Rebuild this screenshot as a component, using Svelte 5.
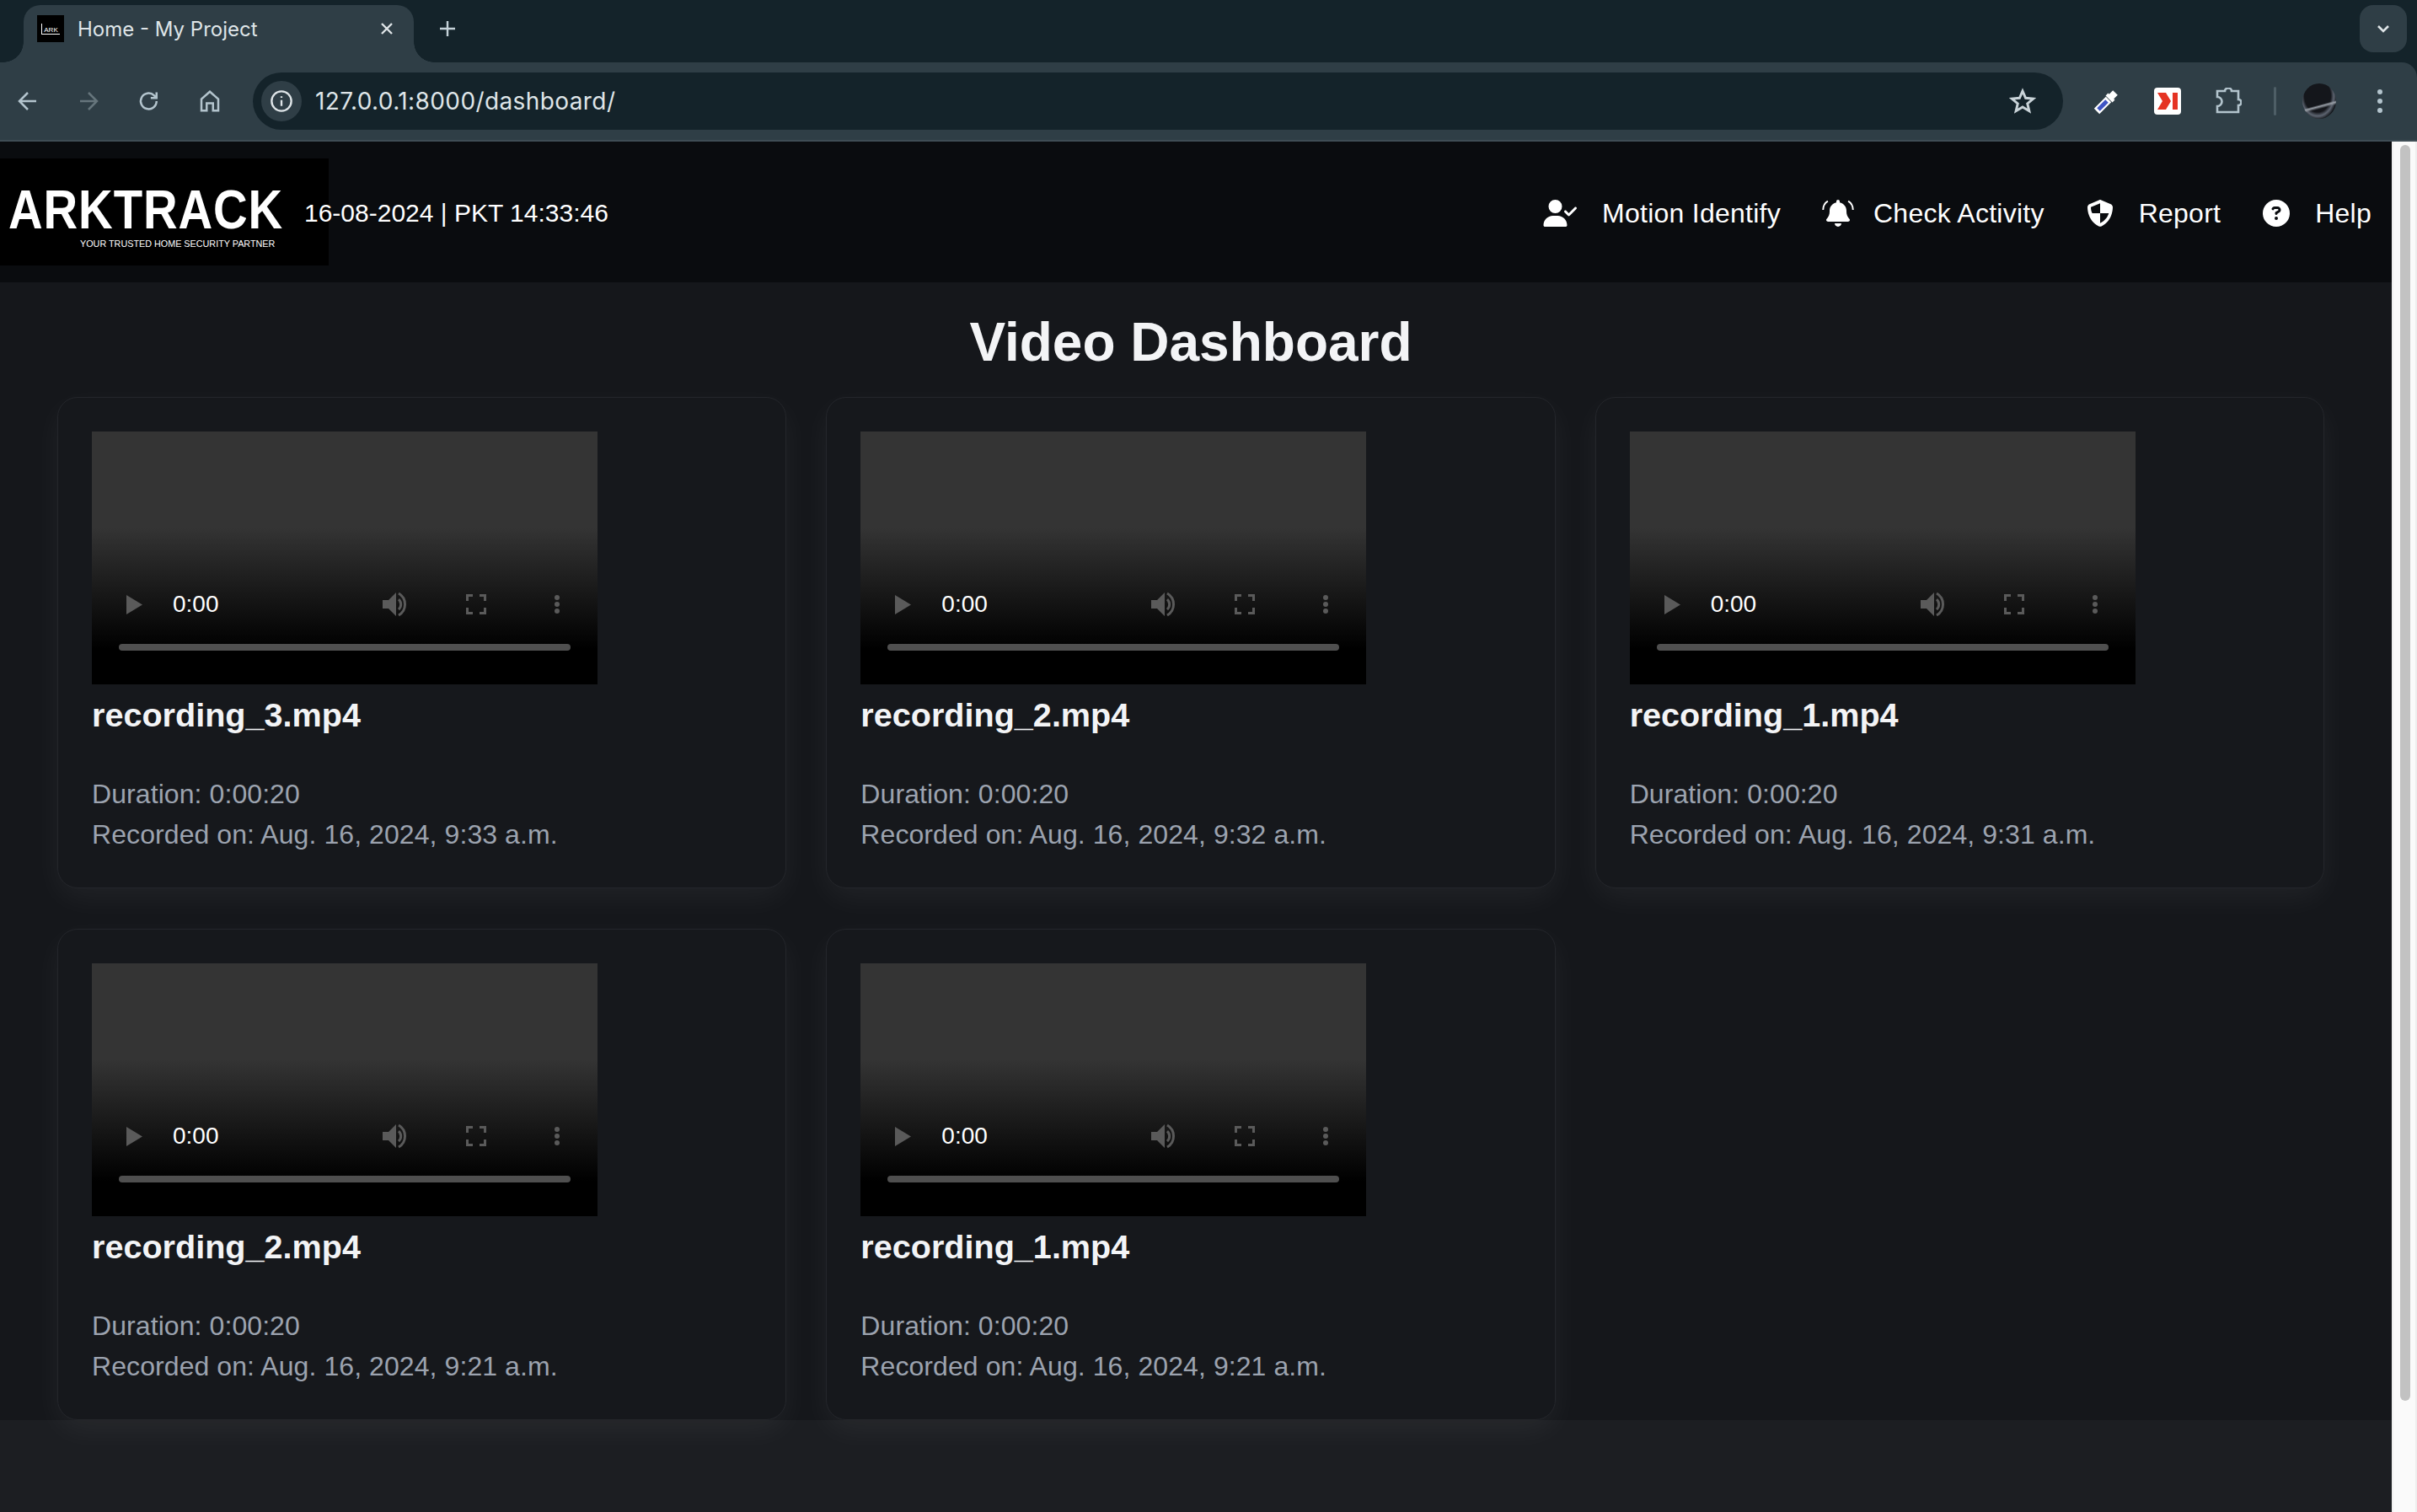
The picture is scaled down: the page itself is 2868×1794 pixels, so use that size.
<script>
	const recordings = [
		{ name: "recording_3.mp4", date: "Aug. 16, 2024, 9:33 a.m." },
		{ name: "recording_2.mp4", date: "Aug. 16, 2024, 9:32 a.m." },
		{ name: "recording_1.mp4", date: "Aug. 16, 2024, 9:31 a.m." },
		{ name: "recording_2.mp4", date: "Aug. 16, 2024, 9:21 a.m." },
		{ name: "recording_1.mp4", date: "Aug. 16, 2024, 9:21 a.m." }
	];
</script>

<div class="chrome">
	<div class="tabstrip">
		<div class="tab">
			<span class="favicon"><span>ARK</span></span>
			<span class="tab-title">Home - My Project</span>
			<svg class="tab-x" viewBox="0 0 16 16"><path d="M2 2l12 12M14 2L2 14" /></svg>
		</div>
		<svg class="newtab" viewBox="0 0 20 20"><path d="M10 1v18M1 10h18" /></svg>
		<div class="tab-menu">
			<svg viewBox="0 0 16 10"><path d="M2 2l6 6 6-6" /></svg>
		</div>
	</div>
	<div class="toolbar">
		<svg class="tb-icon" viewBox="0 0 24 24"><path d="M20 12H5M12 4l-8 8 8 8" /></svg>
		<svg class="tb-icon dim" viewBox="0 0 24 24"><path d="M4 12h15M12 4l8 8-8 8" /></svg>
		<svg class="tb-icon" viewBox="0 0 24 24"><path d="M19 12a7.500 7.500 0 1 1-2.400-5.500L19 9M19 3.500V9h-5.500" /></svg>
		<svg class="tb-icon" viewBox="0 0 24 24"><path d="M4 21V10l8-7 8 7v11h-5v-7H9v7z" /></svg>
		<div class="omnibox">
			<span class="info">
				<svg viewBox="0 0 24 24"><circle cx="12" cy="12" r="10" /><path d="M12 11v6M12 7v1.600" /></svg>
			</span>
			<span class="url">127.0.0.1:8000/dashboard/</span>
			<svg class="star" viewBox="0 0 24 24"><path d="M12 3l2.700 6.200 6.800.6-5.200 4.400 1.600 6.600L12 17.300 6.100 20.800l1.600-6.600L2.500 9.800l6.800-.6z" /></svg>
		</div>
		<svg class="ext dropper" viewBox="0 0 32 32">
			<path d="M4 28L18 14" stroke="#fff" stroke-width="9" />
			<path d="M6 26L16 16" stroke="#3f55c4" stroke-width="5" />
			<path d="M16 8l8 8" stroke="#fff" stroke-width="4" />
			<path d="M21 11l5-5" stroke="#fff" stroke-width="8" />
		</svg>
		<div class="ext-red">
			<svg viewBox="0 0 32 32"><path d="M4 6h10l6 10-6 10H4l6-10zM22 6h6v20h-6z" fill="#e53323" /></svg>
		</div>
		<svg class="ext puzzle" viewBox="0 0 32 32"><path d="M3 4h9a4 3.500 0 0 1 8 0h8v10a3.500 3.500 0 0 1 0 7v8H3v-7a4 4 0 0 0 0-11z" /></svg>
		<span class="sep"></span>
		<span class="avatar"></span>
		<div class="dots"><i></i><i></i><i></i></div>
	</div>
</div>

<div class="page">
	<div class="content">
		<header>
			<div class="left">
				<div class="logo">
					<span class="wordmark">ARKTRACK</span>
					<span class="tagline">YOUR TRUSTED HOME SECURITY PARTNER</span>
				</div>
				<span class="clock">16-08-2024 | PKT 14:33:46</span>
			</div>
			<nav>
				<a href="#motion">
					<svg class="i-user" viewBox="0 0 640 512"><path d="M96 128a128 128 0 1 1 256 0A128 128 0 1 1 96 128zM0 482.300C0 383.800 79.800 304 178.300 304h91.400C368.200 304 448 383.800 448 482.300c0 16.400-13.300 29.700-29.700 29.700H29.700C13.300 512 0 498.700 0 482.300zM625 177L497 305c-9.400 9.400-24.600 9.400-33.900 0l-64-64c-9.400-9.400-9.400-24.600 0-33.900s24.600-9.400 33.900 0L480 254.100 591 143c9.400-9.400 24.600-9.400 33.900 0s9.400 24.600 0 33.900z" /></svg>
					Motion Identify
				</a>
				<a class="check" href="#activity">
					<svg class="i-bell" viewBox="-90 0 628 512">
						<path d="M224 0c-17.700 0-32 14.300-32 32V51.200C119 66 64 130.600 64 208v18.800c0 47-17.300 92.400-48.500 127.600l-7.400 8.300c-8.400 9.400-10.400 22.900-5.300 34.400S19.400 416 32 416H416c12.600 0 24-7.400 29.200-18.900s3.100-25-5.300-34.400l-7.400-8.300C401.300 319.200 384 273.900 384 226.800V208c0-77.400-55-142-128-156.800V32c0-17.700-14.300-32-32-32zm45.300 493.300c12-12 18.700-28.300 18.700-45.300H224 160c0 17 6.700 33.300 18.700 45.300s28.300 18.700 45.300 18.700s33.300-6.700 45.300-18.700z" />
						<path class="ring" d="M-60 190C-60 120-25 60 30 25M508 190C508 120 473 60 418 25" />
					</svg>
					Check Activity
				</a>
				<a href="#report">
					<svg class="i-shield" viewBox="0 0 512 512">
						<path d="M256 0c4.600 0 9.200 1 13.400 2.900L457.700 82.800c22 9.300 38.400 31 38.300 57.200c-.5 99.200-41.300 280.700-213.600 363.200c-16.700 8-36.100 8-52.800 0C57.300 420.700 16.500 239.200 16 140c-.1-26.200 16.300-47.900 38.300-57.200L242.700 2.900C246.800 1 251.400 0 256 0z" />
						<path class="quad" d="M256 66.800L80 141.400c.4 35 7 85 26 114.600h150zM256 256v188.800C340 404 400 330 420 256z" />
					</svg>
					Report
				</a>
				<a href="#help">
					<svg class="i-help" viewBox="0 0 512 512"><path d="M256 512A256 256 0 1 0 256 0a256 256 0 1 0 0 512zM169.800 165.300c7.900-22.300 29.100-37.300 52.800-37.300h58.300c34.900 0 63.100 28.300 63.100 63.100c0 22.600-12.100 43.500-31.700 54.800L280 264.400c-.2 13-10.900 23.600-24 23.600c-13.300 0-24-10.700-24-24V250.500c0-8.600 4.600-16.500 12.100-20.800l44.300-25.400c4.700-2.700 7.600-7.700 7.600-13.100c0-8.400-6.800-15.100-15.100-15.100H222.600c-3.400 0-6.400 2.100-7.500 5.300l-.4 1.200c-4.400 12.500-18.200 19-30.600 14.600s-19-18.200-14.600-30.600l.4-1.200zM224 352a32 32 0 1 1 64 0 32 32 0 1 1 -64 0z" fill-rule="evenodd" /></svg>
					Help
				</a>
			</nav>
		</header>

		<main>
			<h1>Video Dashboard</h1>
			<div class="grid">
				{#each recordings as rec}
					<article class="card">
						<div class="video">
							<div class="controls">
								<svg class="play" viewBox="0 0 19 23"><path d="M0 0l19 11.500L0 23z" /></svg>
								<span class="time">0:00</span>
								<svg class="vol" viewBox="0 0 30 30"><path d="M0 10h7l9-9v28l-9-9H0z" /><path class="arc" d="M19 9a8 8 0 0 1 0 12M19 2a15 15 0 0 1 0 26" /></svg>
								<svg class="full" viewBox="0 0 24 24"><path d="M1.500 8V1.500H8M16 1.500h6.500V8M22.500 16v6.500H16M8 22.500H1.500V16" /></svg>
								<svg class="more" viewBox="0 0 6 22"><circle cx="3" cy="3" r="3" /><circle cx="3" cy="11" r="3" /><circle cx="3" cy="19" r="3" /></svg>
							</div>
							<div class="progress"></div>
						</div>
						<h3>{rec.name}</h3>
						<p>Duration: 0:00:20<br />Recorded on: {rec.date}</p>
					</article>
				{/each}
			</div>
		</main>
	</div>
	<div class="scrollbar"><div class="thumb"></div></div>
</div>

<style>
	:global(body) {
		background: #1c1e22;
		overflow: hidden;
		font-family: "Liberation Sans", Arial, sans-serif;
	}

	.chrome {
		height: 168px;
		background: #14232a;
	}
	.tabstrip {
		display: flex;
		align-items: flex-start;
		height: 74px;
		padding: 6px 12px 0 28px;
		box-sizing: border-box;
	}
	.tab {
		position: relative;
		display: flex;
		align-items: center;
		width: 463px;
		height: 68px;
		padding: 0 24px 12px 16px;
		box-sizing: border-box;
		background: #2f3e46;
		border-radius: 20px 20px 0 0;
	}
	.tab::before, .tab::after {
		content: "";
		position: absolute;
		bottom: 0;
		width: 24px;
		height: 24px;
	}
	.tab::before {
		left: -24px;
		background: radial-gradient(circle at 0 0, transparent 23.5px, #2f3e46 24px);
	}
	.tab::after {
		right: -24px;
		background: radial-gradient(circle at 100% 0, transparent 23.5px, #2f3e46 24px);
	}
	.favicon {
		display: flex;
		align-items: center;
		justify-content: center;
		width: 32px;
		height: 32px;
		background: #000;
		color: #fff;
		font-size: 8px;
	}
	.favicon span {
		padding: 3px 2px 0 2px;
		border-left: 1px solid #fff;
		border-bottom: 1px solid #fff;
		line-height: 9px;
	}
	.tab-title {
		margin-left: 16px;
		flex: 1;
		font-family: Inter, sans-serif;
		font-size: 24px;
		color: #dfe5e8;
	}
	.tab-x {
		width: 16px;
		height: 16px;
		fill: none;
		stroke: #dfe5e8;
		stroke-width: 2.400;
	}
	.newtab {
		width: 20px;
		height: 20px;
		margin: 18px 0 0 30px;
		fill: none;
		stroke: #c5d2d9;
		stroke-width: 2.400;
	}
	.tab-menu {
		display: flex;
		align-items: center;
		justify-content: center;
		width: 56px;
		height: 56px;
		margin-left: auto;
		background: #2f3e46;
		border-radius: 16px;
	}
	.tab-menu svg {
		width: 16px;
		height: 10px;
		fill: none;
		stroke: #dfe5e8;
		stroke-width: 2.600;
	}

	.toolbar {
		display: flex;
		align-items: center;
		height: 92px;
		padding: 0 0 0 18px;
		background: #2f3e46;
		border-bottom: 2px solid #3f4d55;
		border-radius: 0 18px 0 0;
	}
	.tb-icon {
		flex: none;
		width: 30px;
		height: 30px;
		margin-right: 42px;
		fill: none;
		stroke: #b3c4cd;
		stroke-width: 2;
	}
	.tb-icon.dim {
		stroke: #66757c;
	}
	.omnibox {
		flex: none;
		display: flex;
		align-items: center;
		width: 2148px;
		height: 68px;
		margin-left: -6px;
		padding: 0 32px 0 10px;
		box-sizing: border-box;
		background: #14232a;
		border-radius: 34px;
	}
	.info {
		display: flex;
		align-items: center;
		justify-content: center;
		width: 48px;
		height: 48px;
		background: #2f3e46;
		border-radius: 50%;
	}
	.info svg {
		width: 28px;
		height: 28px;
		fill: none;
		stroke: #dfe5e8;
		stroke-width: 2;
	}
	.url {
		margin-left: 16px;
		flex: 1;
		font-family: Inter, sans-serif;
		font-size: 28px;
		letter-spacing: 0.400px;
		color: #dfe5e8;
	}
	.star {
		width: 32px;
		height: 32px;
		fill: none;
		stroke: #c9d3d8;
		stroke-width: 2.200;
	}
	.ext {
		flex: none;
		width: 32px;
		height: 32px;
		margin-left: 36px;
	}
	.ext-red {
		flex: none;
		width: 32px;
		height: 32px;
		margin-left: 40px;
		background: #fff;
		border-radius: 4px;
	}
	.ext-red svg {
		display: block;
	}
	.puzzle {
		margin-left: 40px;
		fill: none;
		stroke: #b3c4cd;
		stroke-width: 2.600;
	}
	.sep {
		flex: none;
		width: 3px;
		height: 34px;
		margin-left: 38px;
		background: #4e5e66;
		border-radius: 2px;
	}
	.avatar {
		flex: none;
		width: 40px;
		height: 42px;
		margin-left: 31px;
		border-radius: 50%;
		background:
			linear-gradient(165deg, transparent 58%, #9aa0a8 62%, transparent 68%),
			radial-gradient(ellipse at 45% 35%, #14161b 0 50%, #5d6470 62%, #12151a 74%, #3d4656 100%);
	}
	.dots {
		display: flex;
		flex-direction: column;
		gap: 5px;
		margin-left: 49px;
	}
	.dots i {
		width: 6px;
		height: 6px;
		background: #b3c4cd;
		border-radius: 50%;
	}

	.page {
		display: flex;
		height: 1626px;
	}
	.content {
		flex: 1;
		min-width: 0;
	}
	.scrollbar {
		width: 30px;
		padding: 4px 6px 0 8px;
		box-sizing: border-box;
		background: #fafafa;
		border-left: 2px solid #f0f0f0;
		border-right: 2px solid #eee;
	}
	.thumb {
		height: 1490px;
		background: #c2c2c2;
		border-radius: 8px;
	}

	header {
		display: flex;
		align-items: center;
		justify-content: space-between;
		height: 167px;
		padding-right: 24px;
		background: #0a0c0f;
		color: #fff;
	}
	.left {
		display: flex;
		align-items: center;
	}
	.logo {
		display: flex;
		flex-direction: column;
		width: 390px;
		height: 127px;
		padding: 38px 0 0 10px;
		box-sizing: border-box;
		background: #000;
		color: #fff;
	}
	.wordmark {
		font-size: 64px;
		line-height: 46px;
		font-weight: 700;
		letter-spacing: 1px;
		transform: scaleX(0.88);
		transform-origin: left;
	}
	.tagline {
		margin: 11px 0 0 85px;
		font-size: 10.800px;
		line-height: 12px;
		white-space: nowrap;
	}
	.clock {
		margin: 3px 0 0 -29px;
		font-size: 30px;
	}
	nav {
		display: flex;
		align-items: center;
		gap: 48px;
		margin-top: 3px;
	}
	nav a {
		display: flex;
		align-items: center;
		gap: 28px;
		color: #fff;
		font-size: 32px;
		letter-spacing: 0.250px;
		text-decoration: none;
	}
	nav a.check {
		gap: 22px;
	}
	nav svg {
		height: 32px;
		fill: #fff;
	}
	.i-user {
		width: 43px;
	}
	.i-bell {
		width: 40px;
	}
	.ring {
		fill: none;
		stroke: #fff;
		stroke-width: 32;
	}
	.i-shield {
		width: 36px;
	}
	.quad {
		fill: #0a0c0f;
	}
	.i-help {
		width: 36px;
	}

	main {
		padding: 0 80px 0 68px;
		background: #15171b;
	}
	h1 {
		height: 136px;
		margin: 0;
		padding-top: 34px;
		box-sizing: border-box;
		text-align: center;
		font-size: 64px;
		line-height: 74px;
		font-weight: 700;
		color: #f3f4f6;
	}
	.grid {
		display: grid;
		grid-template-columns: repeat(3, 1fr);
		gap: 48px 47px;
	}
	.card {
		height: 583px;
		padding: 40px;
		box-sizing: border-box;
		background: #16181c;
		border: 1px solid #24262b;
		border-radius: 24px;
		box-shadow: 0 12px 36px rgba(255, 255, 255, 0.05);
	}
	.video {
		display: flex;
		flex-direction: column;
		justify-content: flex-end;
		width: 600px;
		height: 300px;
		padding: 0 32px 40px;
		box-sizing: border-box;
		background: linear-gradient(#343434 0 38%, #000 86%);
	}
	.controls {
		display: flex;
		align-items: center;
		height: 30px;
		margin-bottom: 32px;
		padding-left: 9px;
	}
	.controls svg {
		fill: #5a5a5a;
	}
	.play {
		width: 19px;
		height: 23px;
	}
	.time {
		margin-left: 36px;
		flex: 1;
		font-size: 28px;
		color: #fff;
	}
	.vol {
		width: 30px;
		height: 30px;
	}
	.arc {
		fill: none;
		stroke: #5a5a5a;
		stroke-width: 3;
	}
	.controls .full {
		width: 24px;
		height: 24px;
		margin-left: 69px;
		fill: none;
		stroke: #5a5a5a;
		stroke-width: 3;
	}
	.more {
		width: 6px;
		height: 22px;
		margin: 0 13px 0 81px;
	}
	.progress {
		height: 8px;
		background: #4f4f4f;
		border-radius: 4px;
	}
	h3 {
		margin: 12px 0 0;
		font-size: 39.600px;
		line-height: 48px;
		font-weight: 700;
		color: #f3f4f6;
	}
	p {
		margin: 46px 0 0;
		font-size: 32px;
		letter-spacing: 0.080px;
		line-height: 48px;
		color: #9ca3af;
	}
</style>
